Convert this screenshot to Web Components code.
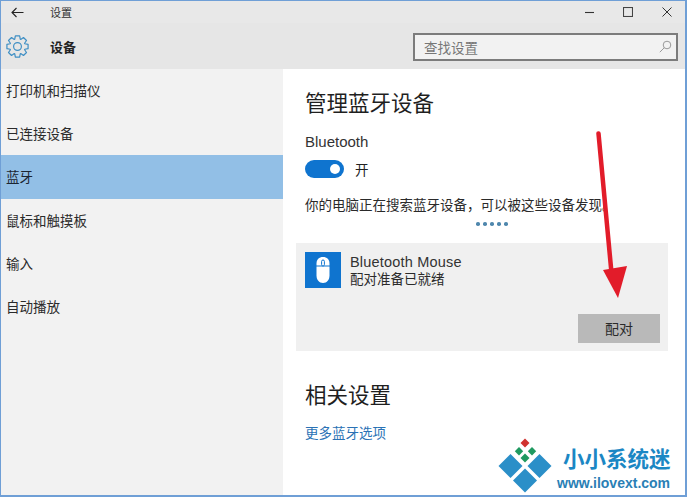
<!DOCTYPE html>
<html>
<head>
<meta charset="utf-8">
<title>设置</title>
<style>
html, body { margin: 0; padding: 0; background: #fff; }
body { font-family: "Liberation Sans", "Noto Sans CJK SC", sans-serif; color: #222; width: 687px; height: 497px; overflow: hidden; }
</style>
</head>
<body>

<settings-window>
	<title-bar slot="top">设置</title-bar>
	<search-header slot="top" title="设备" placeholder="查找设置"></search-header>
	<nav-list slot="nav">
		<nav-item>打印机和扫描仪</nav-item>
		<nav-item>已连接设备</nav-item>
		<nav-item selected>蓝牙</nav-item>
		<nav-item>鼠标和触摸板</nav-item>
		<nav-item>输入</nav-item>
		<nav-item>自动播放</nav-item>
	</nav-list>
	<bluetooth-page slot="main"></bluetooth-page>
</settings-window>
<red-arrow></red-arrow>
<site-logo></site-logo>

<script>
// Small helper, every element just sets its html in an open shadow root
class Base extends HTMLElement {
	connectedCallback() {
		if (this.shadowRoot) return;
		this.attachShadow({ mode: 'open' }).innerHTML = this.html();
	}
}

// 8 tooth gear outline, centred on 11.5,11.5
function gearPath() {
	const pts = [];
	for (let i = 0; i < 8; i++) {
		const a = i * Math.PI / 4;
		for (const [r, d] of [[7.8, -0.36], [10.8, -0.2], [10.8, 0.2], [7.8, 0.36]]) {
			pts.push((11.5 + r * Math.sin(a + d)).toFixed(2) + ' ' + (11.5 - r * Math.cos(a + d)).toFixed(2));
		}
	}
	return 'M' + pts.join('L') + 'Z';
}

class SettingsWindow extends Base {
	html() {
		return `<style>
			:host { display: flex; flex-direction: column; box-sizing: border-box; width: 687px; height: 497px; border: 2px solid #6f9fd6; border-width: 1px 2px 2px 1px; background: #fff; }
			.body { flex: 1; display: flex; min-height: 0; }
			.nav { width: 282px; background: #f2f2f2; flex: none; }
			.main { flex: 1; }
		</style>
		<slot name="top"></slot>
		<div class="body">
			<div class="nav"><slot name="nav"></slot></div>
			<div class="main"><slot name="main"></slot></div>
		</div>`;
	}
}

class TitleBar extends Base {
	html() {
		return `<style>
			:host { display: flex; align-items: center; height: 22px; background: #e8e8e8; font-size: 11px; color: #333; }
			svg { display: block; flex: none; }
			.back { margin-left: 10px; }
			.name { margin-left: 26px; flex: 1; }
			.ctl { display: flex; align-items: center; gap: 29px; margin-right: 13px; }
		</style>
		<svg class="back" width="13" height="11" viewBox="0 0 13 11" fill="none" stroke="#222" stroke-width="1.1"><path d="M12.5 5.5H1M5.5 1 1 5.5 5.5 10"/></svg>
		<span class="name"><slot></slot></span>
		<div class="ctl">
			<svg width="9" height="10" viewBox="0 0 9 10"><path d="M0 5.5h9" stroke="#333" stroke-width="1.1"/></svg>
			<svg width="10" height="10" viewBox="0 0 10 10" fill="none"><rect x=".5" y=".5" width="9" height="9" stroke="#444" stroke-width="1.1"/></svg>
			<svg width="10" height="10" viewBox="0 0 10 10" fill="none"><path d="M.5.5l9 9M9.5.5l-9 9" stroke="#333" stroke-width="1"/></svg>
		</div>`;
	}
}

class SearchHeader extends Base {
	html() {
		return `<style>
			:host { display: flex; align-items: center; height: 46px; background: #e6e6e6; }
			.gear { margin-left: 5px; display: block; flex: none; }
			.title { margin-left: 21px; flex: 1; font-size: 13px; font-weight: bold; color: #222; }
			.search { box-sizing: border-box; width: 265px; height: 28px; margin-right: 7px; margin-top: 1px; border: 2px solid #7c7c7c; background: #f2f2f2; display: flex; align-items: center; justify-content: space-between; padding: 0 4px 0 9px; font-size: 13.5px; color: #777; }
		</style>
		<svg class="gear" width="23" height="23" viewBox="0 0 23 23" fill="none" stroke="#3f8fc4" stroke-width="1.2" stroke-linejoin="round">
			<path d="${gearPath()}"/>
			<circle cx="11.5" cy="11.5" r="3.9"/>
		</svg>
		<span class="title">${this.getAttribute('title')}</span>
		<div class="search"><span>${this.getAttribute('placeholder')}</span>
			<svg width="13" height="13" viewBox="0 0 13 13" fill="none" stroke="#999" stroke-width="1"><circle cx="8" cy="5" r="3.8"/><path d="M5.3 7.7.8 12.2"/></svg>
		</div>`;
	}
}

class NavList extends Base {
	html() {
		return `<style>:host { display: block; }</style><slot></slot>`;
	}
}

class NavItem extends Base {
	html() {
		return `<style>
			:host { display: flex; align-items: center; box-sizing: border-box; height: 43.2px; padding: 0 0 1px 5px; font-size: 13.5px; color: #2b2b2b; }
			:host([selected]) { background: #92bfe6; color: #1c2530; }
		</style><slot></slot>`;
	}
}

class BluetoothPage extends Base {
	html() {
		return `<style>
			:host { display: block; padding: 0 8px 0 13px; }
			h2 { margin: 0; font-weight: normal; font-size: 21.5px; line-height: 28px; color: #1f1f1f; padding-left: 9px; }
			.first { padding-top: 21px; }
			.wrap { padding-left: 9px; }
			.label { font-size: 15px; line-height: 18px; color: #333; margin-top: 15px; }
			.sw { display: flex; align-items: center; gap: 11px; margin-top: 8px; font-size: 13.5px; color: #222; }
			.msg { font-size: 13.5px; line-height: 18px; margin-top: 18px; color: #2a2a2a; white-space: nowrap; }
			.dots { display: flex; gap: 3.5px; margin: 6px 0 0 171px; height: 6px; align-items: center; }
			.dots i { width: 3.5px; height: 3.5px; border-radius: 50%; background: #4f87ad; }
			.rel { margin-top: 31px; }
			a { display: block; margin: 12px 0 0 9px; font-size: 13.5px; color: #2a72b5; text-decoration: none; }
		</style>
		<h2 class="first">管理蓝牙设备</h2>
		<div class="wrap">
			<div class="label">Bluetooth</div>
			<div class="sw"><bt-toggle></bt-toggle><span>开</span></div>
			<div class="msg">你的电脑正在搜索蓝牙设备，可以被这些设备发现。</div>
			<div class="dots"><i></i><i></i><i></i><i></i><i></i></div>
		</div>
		<device-card name="Bluetooth Mouse" status="配对准备已就绪" action="配对"></device-card>
		<h2 class="rel">相关设置</h2>
		<a href="#">更多蓝牙选项</a>`;
	}
}

class BtToggle extends Base {
	html() {
		return `<style>
			:host { display: flex; align-items: center; justify-content: flex-end; box-sizing: border-box; width: 39px; height: 18px; padding-right: 4px; border-radius: 9px; background: #0f74cf; }
			i { width: 10px; height: 10px; border-radius: 50%; background: #fff; }
		</style><i></i>`;
	}
}

class DeviceCard extends Base {
	html() {
		return `<style>
			:host { display: flex; flex-direction: column; box-sizing: border-box; width: 372px; height: 108px; margin-top: 16px; padding: 9px 8px 8px 9px; background: #f0f0f0; }
			.row { display: flex; gap: 9px; flex: 1; }
			.icon { width: 36px; height: 36px; background: #0f74cf; display: flex; align-items: center; justify-content: center; }
			.name { font-size: 14.5px; line-height: 18px; color: #333; letter-spacing: .2px; padding-top: 1px; }
			.status { font-size: 13.5px; line-height: 18px; color: #2a2a2a; }
			.btn { align-self: flex-end; box-sizing: border-box; width: 82px; height: 29px; padding-bottom: 2px; background: #b9b9b9; display: flex; align-items: center; justify-content: center; font-size: 14px; color: #2a2a2a; }
		</style>
		<div class="row">
			<div class="icon">
				<svg width="14" height="26" viewBox="0 0 14 26">
					<path d="M7 0C3 0 .5 2.5.5 6.5v2h13v-2C13.5 2.5 11 0 7 0Z" fill="#fff"/>
					<path d="M.5 9.5v9C.5 22.8 3 26 7 26s6.5-3.2 6.5-7.5v-9Z" fill="#fff"/>
					<rect x="5.6" y="3" width="2.8" height="6" rx="1.4" fill="#fff" stroke="#0f74cf" stroke-width="1"/>
				</svg>
			</div>
			<div>
				<div class="name">${this.getAttribute('name')}</div>
				<div class="status">${this.getAttribute('status')}</div>
			</div>
		</div>
		<div class="btn">${this.getAttribute('action')}</div>`;
	}
}

// annotation drawn on top of the screenshot
class RedArrow extends Base {
	html() {
		return `<style>
			:host { position: absolute; left: 590px; top: 125px; width: 45px; height: 180px; }
			svg { display: block; }
		</style>
		<svg width="45" height="180" viewBox="0 0 45 180">
			<path d="M8.5 8.5 21.5 148" stroke="#e21c2a" stroke-width="4.5" stroke-linecap="round" fill="none"/>
			<path d="M13 145 37 141 28 173Z" fill="#e21c2a"/>
		</svg>`;
	}
}

// watermark in the lower right corner
class SiteLogo extends Base {
	html() {
		return `<style>
			:host { position: absolute; left: 497px; top: 438px; width: 185px; height: 56px; }
			svg { position: absolute; left: 0; top: 0; }
			.cn { position: absolute; left: 66px; top: 10px; font-size: 21.5px; line-height: 24px; color: #1b87c4; white-space: nowrap; font-weight: bold; }
			.en { position: absolute; left: 60px; top: 37px; font-size: 14px; line-height: 16px; font-weight: bold; color: #2a7fb5; white-space: nowrap; }
		</style>
		<svg width="60" height="56" viewBox="0 0 60 56">
			<path d="M28 .5l4.5 4.5L28 9.5 23.5 5Z" fill="#d0322f"/>
			<path d="M22 9l4.2 4.2L22 17.4l-4.2-4.2Z" fill="#1f9960"/>
			<path d="M35 9l4.2 4.2L35 17.4l-4.2-4.2Z" fill="#1f9960"/>
			<path d="M28 15.5l4.5 4.5L28 24.5 23.5 20Z" fill="#1f9960"/>
			<path d="M13.5 16l12 12-12 12-12-12Z" fill="#2b8fc8"/>
			<path d="M42.5 16l12 12-12 12-12-12Z" fill="#2b8fc8"/>
			<path d="M28 30.5l12 12-12 12-12-12Z" fill="#2b8fc8"/>
		</svg>
		<div class="cn">小小系统迷</div>
		<div class="en">www.ilovext.com</div>`;
	}
}

customElements.define('settings-window', SettingsWindow);
customElements.define('title-bar', TitleBar);
customElements.define('search-header', SearchHeader);
customElements.define('nav-list', NavList);
customElements.define('nav-item', NavItem);
customElements.define('bluetooth-page', BluetoothPage);
customElements.define('bt-toggle', BtToggle);
customElements.define('device-card', DeviceCard);
customElements.define('red-arrow', RedArrow);
customElements.define('site-logo', SiteLogo);
</script>
</body>
</html>
